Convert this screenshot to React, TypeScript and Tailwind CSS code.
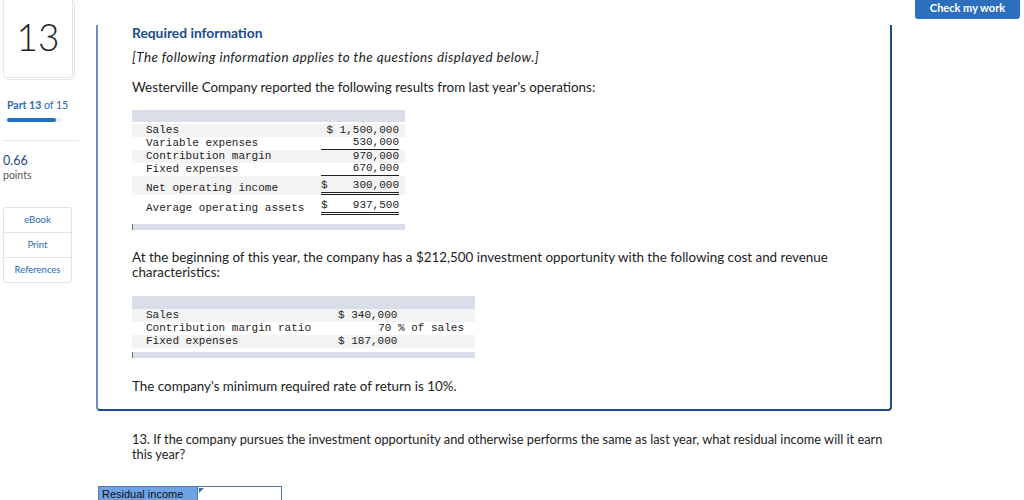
import React from "react";

const mono = { fontFamily: '"Liberation Mono", "DejaVu Sans Mono", monospace' };

function Row({ label, value, stripe, under, dollar, h }: { label: string; value: string; stripe?: boolean; under?: "single" | "double"; dollar?: boolean; h: string }) {
  return (
    <div className={`flex items-end pl-[14px] ${stripe ? "bg-[#f3f3f3]" : "bg-white"} ${h}`}>
      <div className="w-[175px] leading-[13px] whitespace-nowrap">{label}</div>
      <div className={`w-[78px] flex justify-between leading-[13px] ${under === "single" ? "border-b border-[#222]" : ""} ${under === "double" ? "border-b-[3px] border-double border-[#222]" : ""}`}>
        <span>{dollar ? "$" : ""}</span>
        <span>{value}</span>
      </div>
    </div>
  );
}

export default function App() {
  return (
    <div className="relative w-[1024px] h-[500px] overflow-hidden bg-white text-[#222]" style={{ fontFamily: 'Lato, "Open Sans", sans-serif' }}>
      <div className="absolute right-[4px] top-0 h-[19px] w-[105px] rounded-b-[3px] bg-[#2d6fbd] text-white text-[11px] font-bold leading-[16px] text-center">Check my work</div>
      <div className="flex">
        {/* Sidebar */}
        <div className="w-[96px] shrink-0 pl-[3px]">
          <div className="relative w-[70px]">
            <div className="absolute left-[2px] top-[2px] w-[70px] h-[78px] rounded-b-[4px] border border-[#e5e5e5] bg-white" />
            <div className="relative w-[70px] h-[78px] rounded-b-[4px] border border-t-0 border-[#e5e5e5] bg-white flex items-center justify-center text-[37px] font-light text-[#222] pb-[4px]">13</div>
          </div>
          <div className="mt-[20px] pl-[4px] text-[10.5px] text-[#2a6ab5]"><span className="font-bold">Part 13</span> of 15</div>
          <div className="ml-[4px] mt-[4px] w-[56px] h-[4px] rounded-full bg-[#eceff3]">
            <div className="h-[4px] w-[49px] rounded-full bg-[#1f6fc4]" />
          </div>
          <div className="mt-[18px] h-px w-[76px] bg-[#e8e8e8]" />
          <div className="mt-[13px] text-[12.5px] leading-[14px] text-[#1a4b8c]">0.66</div>
          <div className="text-[10.5px] leading-[14px] text-[#555]">points</div>
          <div className="mt-[25px] w-[69px] rounded-[3px] border border-[#e3e3e3] text-[9.5px] text-[#2a6ab5] text-center">
            <div className="h-[25px] leading-[24px] border-b border-[#e3e3e3]">eBook</div>
            <div className="h-[25px] leading-[24px] border-b border-[#e3e3e3]">Print</div>
            <div className="h-[24px] leading-[24px]">References</div>
          </div>
        </div>
        {/* Main */}
        <div className="w-[796px] shrink-0">
          <div className="mt-[28px] h-[386px] border-l-2 border-l-[#6d8fc0] border-r-2 border-r-[#1f4b8a] border-b-2 border-b-[#1f4b8a] rounded-b-[4px] pl-[34px] text-[13.4px]">
            <div className="-mt-[3px] leading-[16px] font-bold text-[13.8px] text-[#1a4b8c]">Required information</div>
            <div className="mt-[8px] leading-[16px] italic tracking-[0.42px]">[The following information applies to the questions displayed below.]</div>
            <div className="mt-[14px] leading-[16px]">Westerville Company reported the following results from last year's operations:</div>
            <div className="mt-[15px] w-[273px] text-[11px] text-[#222]" style={mono}>
              <div className="h-[12px] bg-[#d9dee8]" />
              <div className="h-[2px]" />
              <Row label="Sales" value="$ 1,500,000" stripe h="h-[13px]" />
              <Row label="Variable expenses" value="530,000" under="single" h="h-[13px]" />
              <Row label="Contribution margin" value="970,000" stripe h="h-[13px]" />
              <Row label="Fixed expenses" value="670,000" under="single" h="h-[13px]" />
              <Row label="Net operating income" value="300,000" dollar under="double" stripe h="h-[19px]" />
              <Row label="Average operating assets" value="937,500" dollar under="double" h="h-[20px]" />
              <div className="h-[9px]" />
              <div className="h-[6px] bg-[#d9dee8] border-l border-[#777]" />
            </div>
            <div className="mt-[20px] leading-[15px] w-[740px]">At the beginning of this year, the company has a $212,500 investment opportunity with the following cost and revenue characteristics:</div>
            <div className="mt-[16px] w-[343px] text-[11px]" style={mono}>
              <div className="h-[13px] bg-[#d9dee8]" />
              <div className="flex pl-[14px] h-[13px] leading-[13px] bg-[#f3f3f3]"><div className="w-[192px]">Sales</div><div>$ 340,000</div></div>
              <div className="flex pl-[14px] h-[13px] leading-[13px]"><div className="w-[192px]">Contribution margin ratio</div><div className="w-[126px] text-right">70 % of sales</div></div>
              <div className="flex pl-[14px] h-[13px] leading-[13px] bg-[#f3f3f3]"><div className="w-[192px]">Fixed expenses</div><div>$ 187,000</div></div>
              <div className="h-[4px]" />
              <div className="h-[6px] bg-[#d9dee8] border-l border-[#777]" />
            </div>
            <div className="mt-[20px] leading-[16px]">The company's minimum required rate of return is 10%.</div>
          </div>
          <div className="mt-[21px] pl-[36px] text-[12.8px] leading-[15px] w-[800px]">13. If the company pursues the investment opportunity and otherwise performs the same as last year, what residual income will it earn this year?</div>
          <div className="mt-[24px] ml-[2px] flex h-[16px] text-[11px]" style={{ fontFamily: '"Liberation Sans", Arial, sans-serif' }}>
            <div className="w-[100px] bg-[#6fa3e6] border border-[#5577aa] pl-[3px] leading-[14px] text-[#111]">Residual income</div>
            <div className="relative w-[84px] border border-[#5577aa] border-l-0 bg-white">
              <div className="absolute left-[1px] top-[1px] w-0 h-0 border-t-[5px] border-t-[#3b6fc0] border-r-[5px] border-r-transparent" />
            </div>
          </div>
        </div>
      </div>
    </div>
  );
}
